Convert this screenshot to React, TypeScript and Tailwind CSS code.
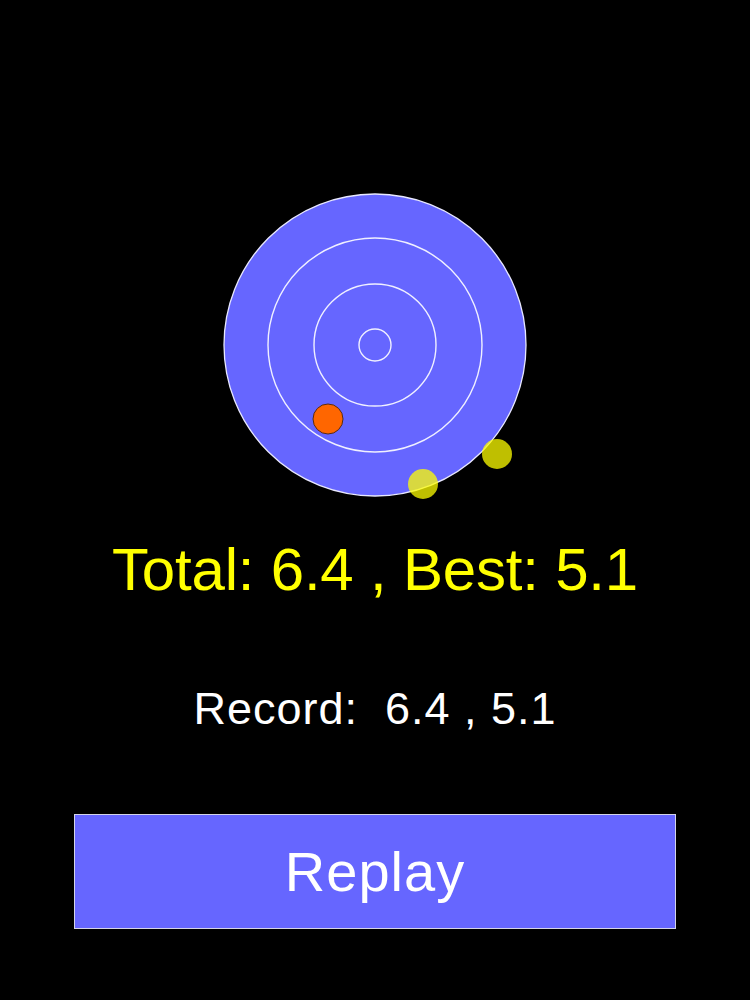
import React from "react";

const rings = [107, 61, 16];

// shots that landed on the target, drawn over the rings
const hits = [
  { x: 113, y: 234, r: 15, fill: "#ff6600", stroke: "#5a2a10", opacity: 1 },
  { x: 282, y: 269, r: 15, fill: "#ffff00", stroke: "none", opacity: 0.75 },
  { x: 208, y: 299, r: 15, fill: "#ffff00", stroke: "none", opacity: 0.75 },
];

function Target() {
  return (
    <svg width={320} height={320} viewBox="0 0 320 320" className="mt-[185px] block">
      <circle cx={160} cy={160} r={151} fill="#6666ff" stroke="#e8e8ff" strokeWidth={1.3} />
      {rings.map((r) => (
        <circle key={r} cx={160} cy={160} r={r} fill="none" stroke="#f0f0ff" strokeWidth={1.4} />
      ))}
      {hits.map((h, i) => (
        <circle
          key={i}
          cx={h.x}
          cy={h.y}
          r={h.r}
          fill={h.fill}
          fillOpacity={h.opacity}
          stroke={h.stroke}
          strokeWidth={1}
        />
      ))}
    </svg>
  );
}

export default function App() {
  return (
    <div
      className="w-[750px] h-[1000px] bg-black flex flex-col items-center"
      style={{ fontFamily: '"Liberation Sans", Arial, sans-serif' }}
    >
      <Target />

      <div className="mt-[35px] text-[60px] leading-[60px] tracking-[-0.2px] text-[#ffff00]">
        Total: 6.4 , Best: 5.1
      </div>

      <div className="mt-[86px] text-[45px] leading-[45px] tracking-[1px] text-white whitespace-pre">
        {"Record:  6.4 , 5.1"}
      </div>

      <button
        type="button"
        className="mt-[83px] w-[602px] h-[115px] flex items-center justify-center bg-[#6666ff] border border-[#d4d4e8] text-white text-[56px] leading-[56px] tracking-[1px]"
      >
        Replay
      </button>
    </div>
  );
}
